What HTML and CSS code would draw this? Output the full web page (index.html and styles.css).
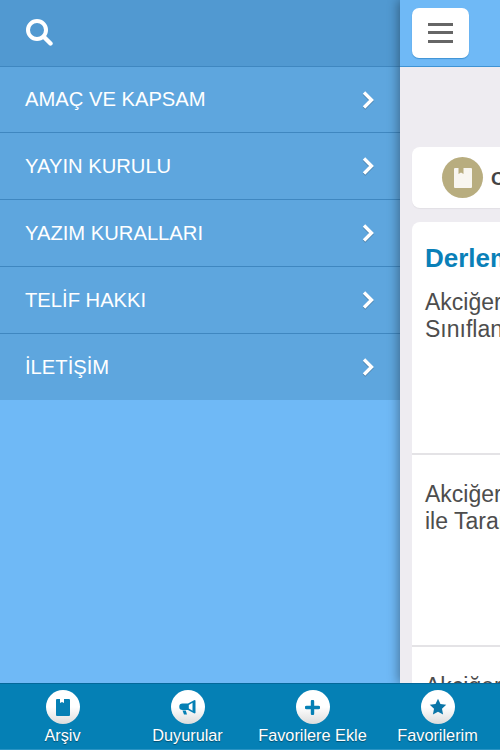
FILE: index.html
```html
<!DOCTYPE html>
<html lang="tr">
<head>
  <meta charset="UTF-8">
  <title>Dergi</title>
  <link rel="stylesheet" href="styles.css">
</head>
<body>
  <div class="app">
    <div class="panes">
      <nav class="side">
        <div class="side-head">
          <svg class="search-icon" viewBox="0 0 28 28" width="28" height="28">
            <circle cx="12" cy="12" r="9" fill="none" stroke="#fff" stroke-width="4"/>
            <path d="M19 19l6.500 6.500" stroke="#fff" stroke-width="4.400" stroke-linecap="round"/>
          </svg>
        </div>
        <a class="side-row first">AMAÇ VE KAPSAM<svg class="chev" viewBox="0 0 14 20" width="14" height="20"><path d="M2 2.500l7.500 7.500-7.500 7.500" fill="none" stroke="#fff" stroke-width="3.400"/></svg></a>
        <a class="side-row">YAYIN KURULU<svg class="chev" viewBox="0 0 14 20" width="14" height="20"><path d="M2 2.500l7.500 7.500-7.500 7.500" fill="none" stroke="#fff" stroke-width="3.400"/></svg></a>
        <a class="side-row">YAZIM KURALLARI<svg class="chev" viewBox="0 0 14 20" width="14" height="20"><path d="M2 2.500l7.500 7.500-7.500 7.500" fill="none" stroke="#fff" stroke-width="3.400"/></svg></a>
        <a class="side-row">TELİF HAKKI<svg class="chev" viewBox="0 0 14 20" width="14" height="20"><path d="M2 2.500l7.500 7.500-7.500 7.500" fill="none" stroke="#fff" stroke-width="3.400"/></svg></a>
        <a class="side-row last">İLETİŞİM<svg class="chev" viewBox="0 0 14 20" width="14" height="20"><path d="M2 2.500l7.500 7.500-7.500 7.500" fill="none" stroke="#fff" stroke-width="3.400"/></svg></a>
      </nav>

      <main class="main">
        <div class="topbar">
          <button class="menu-btn"><span></span><span></span><span></span></button>
        </div>
        <div class="content">
          <div class="issue-card">
            <span class="issue-badge">
              <svg viewBox="0 0 18 20" width="18" height="20"><path d="M1 0h3.500v6l2.500-1.500L9.500 6V0H17a1 1 0 0 1 1 1v18a1 1 0 0 1-1 1H1a1 1 0 0 1-1-1V1a1 1 0 0 1 1-1z" fill="#f8f6f0"/></svg>
            </span>
            <b class="issue-title">Cilt 18 Sayı 2</b>
          </div>
          <div class="list-card">
            <h2 class="list-title">Derleme Yazıları</h2>
            <div class="article">Akciğer Kanserinde Evreleme ve Sınıflandırma Çalışmaları</div>
            <div class="article">Akciğer Kanserinin Bilgisayarlı Tomografi<br>ile Taranması ve Sonuçları</div>
            <div class="article">Akciğer Kanserinde Cerrahi Tedavi</div>
          </div>
        </div>
      </main>
    </div>

    <footer class="tabbar">
      <a class="tab">
        <span class="tab-icon"><svg viewBox="0 0 14 17" width="14" height="17"><path d="M1 0h3v4l2-1 2 1V0h5a1 1 0 0 1 1 1v15a1 1 0 0 1-1 1H1a1 1 0 0 1-1-1V1a1 1 0 0 1 1-1z" fill="#0580b5"/></svg></span>
        Arşiv
      </a>
      <a class="tab">
        <span class="tab-icon"><svg viewBox="0 0 18 15" width="18" height="15"><path d="M15.500 0l1 .5v12.500l-1 .5L9 10H3.500a2.700 2.700 0 0 1 0-6.500H9zM13.500 2.800L9.800 5v3.500l3.700 2.200zM3.500 10.500h3.300l1.200 4H5z" fill="#0580b5" fill-rule="evenodd"/></svg></span>
        Duyurular
      </a>
      <a class="tab">
        <span class="tab-icon"><svg viewBox="0 0 15 15" width="15" height="15"><path d="M7.500 1.500v12M1.500 7.500h12" stroke="#0580b5" stroke-width="3.400" stroke-linecap="round"/></svg></span>
        Favorilere Ekle
      </a>
      <a class="tab">
        <span class="tab-icon"><svg viewBox="0 0 24 24" width="18" height="18"><path d="M12 1l3.300 7.100 7.700 1-5.700 5.300 1.500 7.600L12 18.200 5.200 22l1.500-7.600L1 9.100l7.700-1z" fill="#0b76a8"/></svg></span>
        Favorilerim
      </a>
    </footer>
  </div>
</body>
</html>
```

FILE: styles.css
```css
* {
  box-sizing: border-box;
}

body {
  margin: 0;
  font-family: "Liberation Sans", Arial, sans-serif;
  background: #6fb9f6;
}

.app {
  display: flex;
  flex-direction: column;
  width: 500px;
  height: 750px;
  overflow: hidden;
}

.panes {
  display: flex;
  flex: 1;
  min-height: 0;
}

/* left menu */
.side {
  flex: 0 0 400px;
  background: #6fb9f6;
}

.side-head {
  display: flex;
  align-items: center;
  height: 67px;
  padding: 0 0 3px 25px;
  background: #5199d1;
  border-bottom: 1px solid #3f87c0;
}

.search-icon {
  display: block;
}

.side-row {
  display: flex;
  align-items: center;
  justify-content: space-between;
  height: 67px;
  padding: 0 24px 0 25px;
  background: #5ea6de;
  border-bottom: 1px solid #3f87c0;
  color: #fff;
  font-size: 20.200px;
}

.side-row.first {
  height: 66px;
}

.side-row.last {
  height: 66px;
  border-bottom: 0;
}

.chev {
  display: block;
  filter: drop-shadow(0 1px 0 rgba(0, 0, 0, 0.25));
}

/* main panel, pushed mostly off screen */
.main {
  flex: 0 0 100px;
  position: relative;
  overflow: hidden;
  background: #eeecf1;
  box-shadow: -2px 0 10px rgba(0, 0, 0, 0.35);
}

.topbar {
  display: flex;
  align-items: center;
  height: 67px;
  padding: 0 0 1px 12px;
  background: #6fb9f6;
  border-bottom: 1px solid #3f93d4;
}

.menu-btn {
  display: flex;
  flex-direction: column;
  align-items: center;
  justify-content: center;
  gap: 5.500px;
  width: 57px;
  height: 50px;
  padding: 0;
  background: #fff;
  border: 0;
  border-radius: 7px;
  box-shadow: 0 1px 1px #3f93d4;
}

.menu-btn span {
  display: block;
  width: 25px;
  height: 3px;
  background: #666;
}

.content {
  width: 488px;
  margin-left: 12px;
  padding-top: 80px;
}

.issue-card {
  display: flex;
  align-items: center;
  gap: 8px;
  height: 61px;
  padding-left: 30px;
  background: #fff;
  border-radius: 8px 0 0 8px;
  box-shadow: 0 1px 1px #e2e0e5;
}

.issue-badge {
  display: flex;
  align-items: center;
  justify-content: center;
  width: 41px;
  height: 41px;
  border-radius: 50%;
  background: #b8ad7f;
}

.issue-title {
  padding-top: 2px;
  font-size: 19px;
  color: #444;
  white-space: nowrap;
}

.list-card {
  margin-top: 14px;
  background: #fff;
  border-radius: 8px 0 0 0;
}

.list-title {
  margin: 0;
  padding: 21px 13px 0;
  font-size: 26px;
  line-height: 30px;
  color: #0a80b8;
}

.article {
  height: 192px;
  padding: 26px 13px 0;
  font-size: 23px;
  line-height: 27px;
  color: #4d4d4d;
  border-bottom: 2px solid #e4e3e6;
}

.list-title + .article {
  height: 182px;
  padding-top: 16px;
}

/* bottom tabs */
.tabbar {
  position: relative;
  display: flex;
  flex: 0 0 67px;
  background: #0580b5;
  border-top: 1px solid #04689a;
  border-bottom: 1px solid #2a94c4;
}

.tab {
  display: flex;
  flex: 0 0 125px;
  flex-direction: column;
  align-items: center;
  padding-top: 6px;
  color: #fff;
  font-size: 16.300px;
  line-height: 18px;
  white-space: nowrap;
  text-shadow: 0 1px 1px rgba(0, 0, 0, 0.4);
}

.tab-icon {
  display: flex;
  align-items: center;
  justify-content: center;
  width: 34px;
  height: 34px;
  margin-bottom: 2px;
  border-radius: 50%;
  background: linear-gradient(#fff, #fff 50%, #dcdcdc);
}
```
